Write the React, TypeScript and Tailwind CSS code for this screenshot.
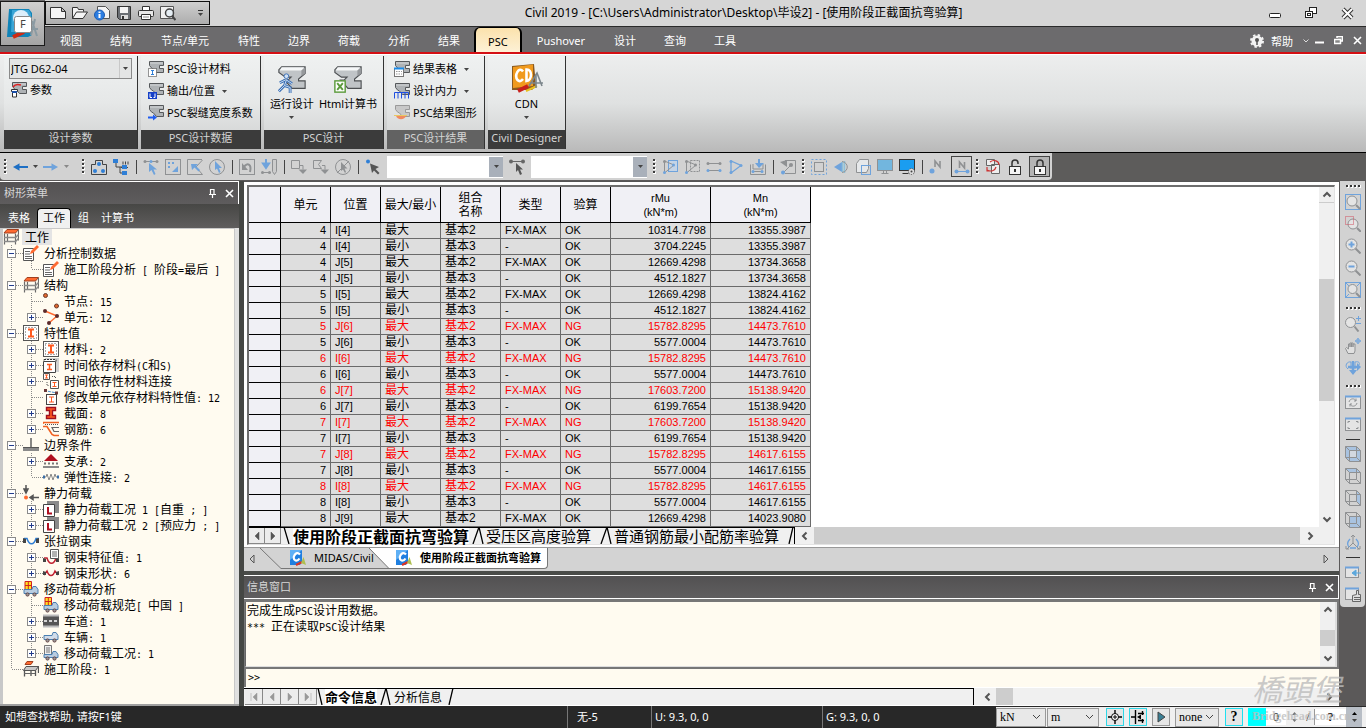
import { Fragment, useState } from "react";
import type { ReactNode } from "react";
import clsx from "clsx";

/* ---------- small helpers ---------- */

function Ic({ children, s = 16, vb = 16 }: { children: ReactNode; s?: number; vb?: number }) {
  return (
    <svg width={s} height={s} viewBox={`0 0 ${vb} ${vb}`} fill="none" className="shrink-0" aria-hidden="true">
      {children}
    </svg>
  );
}

const Caret = ({ className = "text-[#444]" }: { className?: string }) => (
  <svg width="5" height="3" viewBox="0 0 5 3" className={clsx("shrink-0", className)} aria-hidden="true">
    <path d="M0 0h5L2.5 3z" fill="currentColor" />
  </svg>
);

// half-width latin next to full-width chinese
function Mixed({ text }: { text: string }) {
  return (
    <>
      {text.split(/([\x20-\x7e]+)/).map((t, i) =>
        i % 2 ? (
          <span key={i} className="text-[10px] font-['DejaVu_Sans_Mono',monospace]">
            {t}
          </span>
        ) : (
          <Fragment key={i}>{t}</Fragment>
        ),
      )}
    </>
  );
}

const Chevron = ({ dir }: { dir: "up" | "down" | "left" | "right" }) => (
  <Ic s={10} vb={10}>
    <path
      d={
        { up: "M1.5 6.5 5 3l3.5 3.5", down: "M1.5 3.5 5 7l3.5-3.5", left: "M6.5 1.5 3 5l3.5 3.5", right: "M3.5 1.5 7 5 3.5 8.5" }[dir]
      }
      stroke="#555"
      strokeWidth="2"
    />
  </Ic>
);

/* ---------- icons ---------- */

const BLUE = "#2f7fd6";
const SOFT = "#6fa3dc";
const GRAY = "#8f9193";

const beam = (
  <>
    <path d="M1.500.500h14v4h-4v3h4v4h-7l-3.500-4H4l-2.500-3z" fill="#aeb2b5" stroke="#55585b" />
    <path d="M2 2h13" stroke="#d4d7d9" />
  </>
);

const icons: Record<string, ReactNode> = {
  newFile: <path d="M.5 2.5h11l4 4v7H.5zM11.5 2.5v4h4" fill="#f4f4f4" stroke="#333" />,
  open: <path d="M.5 13.5v-11h5l1 2h5v2M.5 13.5l4-6.5h11l-4.500 6.500z" fill="#f4f4f4" stroke="#333" />,
  info: (
    <>
      <path d="M3.500 1.500h8l4 4v8h-12z" fill="#f4f4f4" stroke="#555" />
      <circle cx="5.500" cy="10" r="5" fill="#2b7de1" stroke="#1b5ab0" />
      <path d="M5.500 9v4M5.500 6.500v1.500" stroke="#fff" strokeWidth="2" />
    </>
  ),
  save: (
    <>
      <path d="M1.500 1.500h13v13h-11l-2-2z" fill="#6b6f74" stroke="#333" />
      <path d="M4 2h8v6H4z" fill="#f4f4f4" />
      <path d="M5 10h7v4H5z" fill="#ddd" />
      <path d="M6 11h2v3H6z" fill="#333" />
    </>
  ),
  print: (
    <>
      <path d="M4.500 6.500v-5h7v5" fill="#fff" stroke="#333" />
      <rect x=".5" y="5.500" width="15" height="6" rx="1" fill="#e8e8e8" stroke="#333" />
      <path d="M3.500 9.500h9v5h-9z" fill="#fff" stroke="#333" />
      <path d="M5 12h6" stroke="#888" />
    </>
  ),
  preview: (
    <>
      <path d="M.5 1.500h13v12H.5z" fill="#f0f0f0" stroke="#555" />
      <circle cx="9.500" cy="8" r="4" fill="#e6eef4" stroke="#444" strokeWidth="1.500" />
      <path d="m12 11 3.500 4" stroke="#444" strokeWidth="2" />
    </>
  ),
  gear: (
    <>
      <circle cx="8" cy="8" r="5.500" fill="#f4f4f4" />
      <circle cx="8" cy="8" r="6" stroke="#f4f4f4" strokeWidth="2" strokeDasharray="2.400 2.310" />
      <circle cx="8" cy="7" r="2" fill="#555" />
      <path d="M8 8v4" stroke="#555" strokeWidth="1.500" />
    </>
  ),
  param: (
    <>
      {beam}
      <path d="M2 5c2-3 5-3 8-2" stroke="#d22" strokeWidth="1.500" />
      <path d="M.5 7.500h6v2l-1 1v4.500h-4v-4.500l-1-1z" fill="#fff" stroke="#333" />
      <path d="M1 10h5" stroke="#1b4fa8" strokeWidth="2" />
    </>
  ),
  material: (
    <>
      {beam}
      <rect x=".5" y="7.500" width="8" height="8" fill="#fff" stroke="#333" strokeDasharray="1 1" />
      <path d="M3 9.500h3M3 13.500h3M4.500 9v5" stroke={BLUE} />
    </>
  ),
  output: (
    <>
      {beam}
      <rect x="0" y="9" width="9" height="7" fill="#1540c8" />
      <path d="M2 10.500v4h2M7 10.500v4H5.500" stroke="#fff" />
    </>
  ),
  crack: (
    <>
      {beam}
      <path d="M0 12.500h6" stroke="#1f5cf0" strokeWidth="2" />
      <path d="M5 9.500 9 12.500 5 15.500z" fill="#1f5cf0" />
    </>
  ),
  resTable: (
    <>
      {beam}
      <rect x=".5" y="7.500" width="9" height="8" fill="#fff" stroke="#777" />
      <path d="M0 7.500h10" stroke="#1b8be8" strokeWidth="2" />
      <path d="M2 10.500h6M2 13h6" stroke="#999" strokeDasharray="1.500 1" />
    </>
  ),
  force: (
    <>
      {beam}
      <path d="M.5 15.500v-6h14v6M4 9.500v6M7.500 9.500v6M11 9.500v6" stroke="#1f4fe0" />
    </>
  ),
  diagram: (
    <>
      <path d="M1.500.500h14v4h-4v3h4v4h-7l-3.500-4H4l-2.500-3z" fill="#c8c8c8" stroke="#999" />
      <path d="M2 10.500h10c-1 5-9 5-10 0z" fill="#f08a60" />
      <path d="M0 10.500h13" stroke="#e8c860" />
    </>
  ),
  back: <path d="M16 8H4M6.500 6 3 8l3.500 2z" stroke="#1e6fc4" strokeWidth="2" fill="#1e6fc4" />,
  fwd: <path d="M0 8h12M9.500 6 13 8l-3.500 2z" stroke={SOFT} strokeWidth="2" fill={SOFT} />,
  selBox: (
    <>
      <path d="M.5 5.500h4v-4h7v4h4v10H.5z" stroke="#444" />
      <circle cx="8" cy="5" r="2" fill={BLUE} />
      <circle cx="4" cy="12" r="2" fill={BLUE} />
      <circle cx="12" cy="12" r="2" fill={BLUE} />
    </>
  ),
  selTree: (
    <>
      <path d="M3 2v6h7M7 8v6h4M10 2.500v3M12.500 2.500v3M15 2.500v3M8 8.500h7" stroke="#444" />
      <rect x="0" y="0" width="5" height="4" fill={BLUE} />
      <rect x="9" y="6" width="5" height="4" fill={BLUE} />
      <rect x="9" y="12" width="5" height="4" fill={BLUE} />
    </>
  ),
  selSingle: (
    <>
      <path d="M1 2.500h14" stroke={GRAY} />
      <circle cx="2" cy="2.500" r="1.500" fill={GRAY} />
      <circle cx="8" cy="2.500" r="1.500" fill={SOFT} />
      <circle cx="14" cy="2.500" r="1.500" fill={GRAY} />
      <path d="M6 4v9l2.500-2 2.500 5 1.500-1-2-4.500H14z" fill={SOFT} />
    </>
  ),
  selWin: (
    <>
      <rect x=".5" y=".5" width="15" height="15" stroke={GRAY} />
      <path d="M3 3h2v2H3zM3 7h2v2H3zM7 3h2v2H7z" fill={SOFT} />
      <path d="M13 7v6H7z" fill={SOFT} />
    </>
  ),
  selPoly: (
    <>
      <path d="M15 .5H.5v15h15L9 8l6.500-7" stroke={GRAY} />
      <path d="M4 5h7L9 7l4 4-1.500 1.500-4-4L5 11z" fill={SOFT} />
    </>
  ),
  selCircle: (
    <>
      <circle cx="8" cy="8" r="7.500" stroke={GRAY} />
      <path d="M6 2v9l2-1.500 2 4.500 1.500-1-1.500-4h3z" fill={SOFT} />
    </>
  ),
  undo: (
    <>
      <rect x=".5" y=".5" width="15" height="15" stroke={GRAY} />
      <path d="M5 8c3-5 8-3 6 5" stroke={GRAY} strokeWidth="2" />
      <path d="M3 4v7h6z" fill={GRAY} />
    </>
  ),
  drop: (
    <>
      <path d="M5 0v5M2 4.500h6L5 9z" stroke={SOFT} strokeWidth="2" fill={SOFT} />
      <path d="M1 13.500h9" stroke={GRAY} />
      <circle cx="1.500" cy="13.500" r="1.500" fill={GRAY} />
      <circle cx="8.500" cy="13.500" r="1.500" fill={GRAY} />
      <path d="M11.500.500h4v12l-2 3-2-3z" stroke={GRAY} fill="#ccc" />
    </>
  ),
  unWin: (
    <>
      <path d="M.5 1.500h8v8h-8zM9 6.500h3v4" stroke={GRAY} />
      <path d="M7.500 10.500h8.500L12 15z" fill={GRAY} />
    </>
  ),
  unPoly: (
    <>
      <path d="M8.500 1.500H.5v8h8l-3-4zM9 6.500h3v4" stroke={GRAY} />
      <path d="M7.500 10.500h8.500L12 15z" fill={GRAY} />
    </>
  ),
  unCircle: (
    <>
      <circle cx="8" cy="8" r="7.500" stroke={GRAY} />
      <path d="M14 2 2 14" stroke={GRAY} />
      <path d="M6 3v9l2-1.500 2 3.500 1-1-1.500-3.500h3z" fill={GRAY} />
    </>
  ),
  pickNode: (
    <>
      <circle cx="3" cy="2.500" r="2" fill={BLUE} />
      <path d="M5 4.500 7 14l2-2.500 4 4 1.500-1.500-4-4L14 8z" fill="#555" />
    </>
  ),
  pickElem: (
    <>
      <path d="M1 2.500h14" stroke="#666" />
      <circle cx="2" cy="2.500" r="2" fill="#666" />
      <circle cx="14" cy="2.500" r="2" fill="#666" />
      <path d="M7 4v9l2-2 2 5 2-1-2-4.500h3z" fill="#555" />
    </>
  ),
  act1: (
    <>
      <rect x="6.500" y="1.500" width="9" height="11" stroke={SOFT} fill="#c5d4e6" />
      <path d="M2.500 2v12L12 6z" stroke={GRAY} />
      <circle cx="2.500" cy="2.500" r="1.500" fill={GRAY} />
      <circle cx="2.500" cy="13.500" r="1.500" fill={SOFT} />
      <circle cx="11.500" cy="6" r="1.500" fill={SOFT} />
    </>
  ),
  act2: (
    <>
      <rect x="6.500" y="1.500" width="9" height="11" stroke={GRAY} strokeDasharray="2 1" />
      <path d="M2.500 2v12L12 6z" stroke={GRAY} />
      <circle cx="2.500" cy="2.500" r="1.500" fill={GRAY} />
      <circle cx="2.500" cy="13.500" r="1.500" fill={SOFT} />
      <circle cx="11.500" cy="6" r="1.500" fill={GRAY} />
    </>
  ),
  act3: (
    <>
      <path d="M2 4.500h12M2 11.500h12" stroke={GRAY} />
      <circle cx="2" cy="4.500" r="1.500" fill={GRAY} />
      <circle cx="14" cy="4.500" r="1.500" fill={GRAY} />
      <circle cx="2" cy="11.500" r="1.500" fill={SOFT} />
      <circle cx="14" cy="11.500" r="1.500" fill={SOFT} />
    </>
  ),
  act4: (
    <>
      <path d="M3 2v12l10-7.500z" stroke={SOFT} strokeWidth="1.300" />
      <circle cx="3" cy="2.500" r="1.500" fill={SOFT} />
      <circle cx="3" cy="13.500" r="1.500" fill={SOFT} />
      <circle cx="13" cy="6.500" r="1.500" fill={SOFT} />
    </>
  ),
  act5: (
    <>
      <path d="M.5 5.500v10h15v-10M3 5v5h10V5M3 12.500h9" stroke={GRAY} />
      <path d="M10 0v4h4L9 9 5 4h3V0z" fill={SOFT} />
      <circle cx="3" cy="12.500" r="1.500" fill={SOFT} />
      <circle cx="12" cy="12.500" r="1.500" fill={SOFT} />
    </>
  ),
  act6: (
    <>
      <path d="M5 1.500h10.500v13H5M4 13l7-7" stroke={GRAY} />
      <path d="M0 3 7 1v7z" fill={GRAY} />
      <circle cx="3" cy="13.500" r="2" fill={SOFT} />
      <circle cx="11" cy="6" r="2" fill={GRAY} />
    </>
  ),
  fitAll: (
    <>
      <rect x="3.500" y="3.500" width="9" height="9" stroke={GRAY} />
      <rect x=".5" y=".5" width="15" height="15" stroke={SOFT} strokeDasharray="2 2" />
    </>
  ),
  persp: (
    <>
      <path d="m1 8 8-5v10z" fill="#6fa3dc" />
      <path d="M9.500 3v10M11.500 2v12" stroke="#8fc0d8" strokeWidth="1.500" />
      <path d="M9 2.500c7 1 7 10 0 11" stroke={GRAY} />
    </>
  ),
  hidden: (
    <>
      <path d="M1.500 13.500v-9l3-4h9v9l-2 4z" fill="#e6e8ea" stroke={GRAY} />
      <rect x="6.500" y="6.500" width="9" height="9" stroke={SOFT} />
    </>
  ),
  screen: (
    <>
      <rect x=".5" y=".5" width="15" height="11" fill="#72b6de" stroke={GRAY} />
      <path d="M6.500 12v2M9.500 12v2M4.500 14.500h7" stroke={GRAY} />
    </>
  ),
  screenOpt: (
    <>
      <rect x=".5" y=".5" width="15" height="11" fill="#1a9df0" stroke="#333" />
      <path d="M3.500 14.500h6" stroke="#333" />
      <circle cx="12.500" cy="12.500" r="3" fill="#ddd" stroke="#444" strokeDasharray="1 1" />
      <circle cx="12.500" cy="12.500" r="1" fill="#444" />
    </>
  ),
  nodeNum: (
    <>
      <circle cx="3" cy="12" r="2.500" fill={SOFT} />
      <path d="M6 8V2l5 6V2" stroke={GRAY} strokeWidth="1.600" />
    </>
  ),
  elemNum: (
    <>
      <path d="M2 12.500h12" stroke={SOFT} />
      <circle cx="2.500" cy="12.500" r="2" fill={SOFT} />
      <circle cx="13.500" cy="12.500" r="2" fill={SOFT} />
      <path d="M5.500 9V3l5 6V3" stroke={GRAY} strokeWidth="1.600" />
    </>
  ),
  swap: (
    <>
      <path d="M1.500.500h8v6h-8zM6.500 5.500h8v9h-8z" stroke="#666" fill="#eee" />
      <path d="M5 3c4-3 9-1 9 3M11 8c-1 4-5 5-9 3M2 8v4h4" stroke="#c33" strokeWidth="1.200" />
    </>
  ),
  unlock: (
    <>
      <rect x="2.500" y="7.500" width="11" height="8" fill="#f5f5f5" stroke="#333" />
      <path d="M5 7V4c0-4 6-4 6 0v1" stroke="#333" strokeWidth="1.500" />
      <path d="M8 10v3" stroke="#333" strokeWidth="2" />
    </>
  ),
  lock: (
    <>
      <rect x="2.500" y="7.500" width="11" height="8" fill="#f5f5f5" stroke="#333" />
      <path d="M5 7V4c0-4 6-4 6 0v3" stroke="#333" strokeWidth="1.500" />
      <path d="M8 10v3" stroke="#333" strokeWidth="2" />
    </>
  ),
  zWin: (
    <>
      <rect x=".5" y=".5" width="15" height="15" stroke={SOFT} />
      <circle cx="7" cy="7" r="5" fill="#e4e4e4" stroke={GRAY} />
      <path d="m11 11 4 4" stroke={GRAY} strokeWidth="2" />
    </>
  ),
  zDyn: (
    <>
      <circle cx="8" cy="8" r="5" stroke={GRAY} fill="#e4e4e4" />
      <rect x=".5" y=".5" width="8" height="8" stroke="#d05060" strokeDasharray="1 1" />
      <path d="m12 12 4 4" stroke={GRAY} strokeWidth="2" />
    </>
  ),
  zIn: (
    <>
      <circle cx="6.500" cy="6.500" r="5.500" fill="#e4e4e4" stroke={GRAY} />
      <path d="m10.500 10.500 5 5" stroke={GRAY} strokeWidth="2" />
      <path d="M6.500 3.500v6M3.500 6.500h6" stroke={SOFT} strokeWidth="2" />
    </>
  ),
  zOut: (
    <>
      <circle cx="6.500" cy="6.500" r="5.500" fill="#e4e4e4" stroke={GRAY} />
      <path d="m10.500 10.500 5 5" stroke={GRAY} strokeWidth="2" />
      <path d="M3.500 6.500h6" stroke={SOFT} strokeWidth="2" />
    </>
  ),
  zFit: (
    <>
      <rect x=".5" y=".5" width="15" height="15" stroke={SOFT} />
      <path d="m1 1 3 3M15 1l-3 3M1 15l3-3" stroke={SOFT} />
      <circle cx="7.500" cy="7" r="4.500" fill="#e4e4e4" stroke={GRAY} />
      <path d="m11 11 4 4" stroke={GRAY} strokeWidth="2" />
    </>
  ),
  zRate: (
    <>
      <circle cx="5.500" cy="6.500" r="5" fill="#e4e4e4" stroke={GRAY} />
      <path d="m9.500 10.500 4 5" stroke={GRAY} strokeWidth="2" />
      <path d="M13.500 0v5M11 2.500h5M11 7.500h5" stroke={SOFT} />
    </>
  ),
  pan: (
    <>
      <path d="M3 15.500.500 10.500l1-1 2 1.500V6h1.500v3V5h1.500v4V5H8v4V6h2v7l-1 2.500z" fill="#e0e0e0" stroke={GRAY} />
      <path d="M13 0v6M10 3h6" stroke={SOFT} />
      <path d="M13 .5 15.500 3 13 5.500 10.500 3z" stroke={SOFT} />
    </>
  ),
  rotate: (
    <>
      <path d="M8 1v9M3 7h10" stroke={SOFT} strokeWidth="2.500" />
      <path d="M4 10h8l-4 5zM12 3l4 4-4 4z" fill={SOFT} />
      <path d="M3 9C-1 6 2 1 6 2v7M10 9V2c4-1 5 1 4 3" stroke={SOFT} />
    </>
  ),
  redraw: (
    <>
      <rect x=".5" y="2.500" width="15" height="12" fill="#e4e4e4" stroke={GRAY} />
      <path d="M0 2.500h16" stroke={SOFT} strokeWidth="2" />
      <path d="M4 8c1-4 6-4 7-1M12 9c-1 4-6 4-7 1M11 4.500V7H9M5 12.500V10h2" stroke={GRAY} />
    </>
  ),
  initial: (
    <>
      <rect x=".5" y="2.500" width="15" height="12" fill="#e4e4e4" stroke={GRAY} />
      <path d="M0 2.500h16" stroke={SOFT} strokeWidth="2" />
      <path d="M3 7V5.500h2M11 5.500h2V7M3 11v1.500h2M11 12.500h2V11" stroke={GRAY} />
    </>
  ),
  cubeIso: (
    <>
      <path d="M.5.500h11l4 4v11h-11l-4-4z" fill="#a9c3e0" />
      <path d="M4.500 4.500h7v7h-7z" fill="#d2d8e0" />
      <path d="M.5.500h11l4 4v11h-11l-4-4zM4.500 4.500h11M4.500 4.500v11M4.500 4.500l-4-4M11.500.5v11H.5M11.500 11.500l4 4" stroke={GRAY} />
    </>
  ),
  cubeTop: (
    <>
      <path d="M.5.500h11l4 4h-11z" fill="#a9c3e0" />
      <path d="M.5.500h11l4 4v11h-11l-4-4zM4.500 4.500h11M4.500 4.500v11M4.500 4.500l-4-4M11.500.5v11H.5M11.500 11.500l4 4" stroke={GRAY} />
    </>
  ),
  cubeSide: (
    <>
      <path d="M11.500.500l4 4v11l-4-4z" fill="#a9c3e0" />
      <path d="M.5.500h11l4 4v11h-11l-4-4zM4.500 4.500h11M4.500 4.500v11M4.500 4.500l-4-4M11.500.5v11H.5M11.500 11.500l4 4" stroke={GRAY} />
    </>
  ),
  cubeFront: (
    <>
      <path d="M4.500 4.500h11v11h-11z" fill="#a9c3e0" />
      <path d="M.5.500h11l4 4v11h-11l-4-4zM4.500 4.500h11M4.500 4.500v11M4.500 4.500l-4-4M11.500.5v11H.5M11.500 11.500l4 4" stroke={GRAY} />
    </>
  ),
  axes: (
    <>
      <path d="M8 1v8l-6 6M8 9l6 6M6 3l2-2 2 2M1 12v3h3M15 12v3h-3" stroke={GRAY} />
      <path d="M5 5c-3 3-3 6-1 8M11 5c3 3 3 6 1 8M5 14h6" stroke={SOFT} strokeWidth="1.400" />
    </>
  ),
  winBack: (
    <>
      <rect x=".5" y="3.500" width="13" height="10" fill="#e4e4e4" stroke={GRAY} />
      <path d="M0 3.500h14" stroke={SOFT} strokeWidth="2" />
      <path d="M16 9h-5M11 6v6L7 9z" stroke="#5ba7dc" fill="#5ba7dc" />
    </>
  ),
  winHand: (
    <>
      <rect x=".5" y="2.500" width="13" height="11" fill="#e4e4e4" stroke={GRAY} />
      <path d="M0 2.500h14" stroke={SOFT} strokeWidth="2" />
      <path d="M7.500 15.500v-6l4-1V4.500h2v4h2v7z" fill="#ddd" stroke="#666" />
      <path d="M9 11.500h6M9 13.500h6" stroke="#666" />
    </>
  ),
  // tree
  frame: (
    <>
      <path d="M4 .5h11.500l-3 3.500H1z" fill="#ff6a30" stroke="#a04020" />
      <path d="M1.500 4.500v11M12.500 4.500v11M15.500 1v10.500M4.500 5v8" stroke="#6a6a6a" strokeWidth="1.200" />
      <path d="M1 8.500h11.500l3-3M1 12.500h11.500l3-3" stroke="#8a8a8a" strokeWidth="1.400" />
    </>
  ),
  docPen: (
    <>
      <path d="M.5 3.500h10v12H.5z" fill="#fff" stroke="#555" />
      <path d="M2 6.500h5M2 9h5M2 11.500h7M2 13.500h7" stroke="#666" />
      <path d="m7 9 1-3 6-6 2 2-6 6z" fill="#ff6a30" />
    </>
  ),
  nodes: (
    <>
      <circle cx="2.500" cy="2.500" r="2" fill="#e0662c" stroke="#6b3a2a" />
      <circle cx="13.500" cy="13" r="2" fill="#e0662c" stroke="#6b3a2a" />
    </>
  ),
  elems: (
    <>
      <path d="m2 2 12 5-8 7" stroke="#ff6a30" strokeWidth="1.400" />
      <circle cx="2" cy="2" r="2" fill="#5b2a2a" />
      <circle cx="14" cy="7" r="2" fill="#5b2a2a" />
      <circle cx="6" cy="14" r="2" fill="#5b2a2a" />
    </>
  ),
  prop: (
    <>
      <rect x=".5" y=".5" width="15" height="15" fill="#fff" stroke="#555" />
      <path d="M2.500 2.500h11v11h-11z" stroke="#555" strokeDasharray="1 2" />
      <path d="M5 4.500h6M5 11.500h6M8 4v8" stroke="#ff5a20" strokeWidth="2" />
    </>
  ),
  timeMat: (
    <>
      <path d="M2 1h14v14H2z" fill="#d0d0d0" />
      <path d="M1 2.500h12v2H1z" fill="#fff" stroke="#333" strokeDasharray="2 1" />
      <path d="M.5 4.500h12v11H.5z" fill="#fff" stroke="#444" />
      <path d="M4 7.500h5M4 12.500h5M6.500 7v6" stroke="#ff5a20" strokeWidth="1.500" />
    </>
  ),
  timeLink: (
    <>
      <path d="M.5.500h6v6h-6zM7.500 7.500h8v8h-8z" fill="#fff" stroke="#555" />
      <path d="M2 2h3M2 5h3M3.500 2v3M9.500 9.500h4M9.500 13.500h4M11.500 9v5" stroke="#ff5a20" />
      <path d="M9 3.500h3.500V6M4 9v3.500h2" stroke="#555" strokeDasharray="1 1" />
    </>
  ),
  modElem: (
    <>
      <path d="M1 1.500 14 4" stroke="#4a90d0" strokeDasharray="3 1" />
      <path d="M1 0h3v3H1zM12 2.500h3v3h-3z" fill="#6b3a3a" />
      <rect x="3.500" y="5.500" width="10" height="10" fill="#fff" stroke="#444" />
      <path d="M6 8h5M6 13h5M8.500 8v5" stroke="#ff5a20" />
    </>
  ),
  section: <path d="M3.500 2.500h9v3h-3v5h3v3h-9v-3h3v-5h-3z" fill="#ff5a20" stroke="#a01020" strokeWidth="1.400" />,
  rebar: (
    <>
      <path d="M0 3V1.500h16M0 5.500h4l5 8 2 1h5" stroke="#f06020" strokeWidth="1.600" />
      <path d="M16 6.500H9l2 4h5" stroke="#666" strokeWidth="1.200" />
      <path d="M2 3.500h14" stroke="#555" strokeDasharray="1 1" />
    </>
  ),
  bound: (
    <>
      <path d="M8 1v10" stroke="#555" strokeWidth="1.400" />
      <path d="M0 10h16v4H0z" fill="#8a8a8a" />
      <path d="M0 10.500h16" stroke="#555" />
    </>
  ),
  support: (
    <>
      <path d="M8 1 1 8h14z" fill="#b01020" />
      <path d="M1 10.500h14" stroke="#777" strokeWidth="2" strokeDasharray="2 2" />
      <path d="M0 14h16" stroke="#8a8a8a" strokeWidth="2" />
    </>
  ),
  spring: (
    <>
      <path d="M0 8h3l1-3 2 6 2-6 2 6 2-6 1 3h3" stroke="#888" />
      <path d="M0 6.500h2v3H0zM14 6.500h2v3h-2z" fill="#3a6fa8" />
    </>
  ),
  load: (
    <>
      <path d="M3 0v5M1 4h4L3 8z" stroke="#555" strokeWidth="1.500" fill="#555" />
      <path d="M16 12.500h-6M10 10.500v4l-3-2z" stroke="#555" strokeWidth="1.500" fill="#555" />
      <circle cx="3" cy="12.500" r="2" fill="#ff6a30" />
    </>
  ),
  loadCase: (
    <>
      <path d="M4 0h12v12H4z" fill="#8a8a8a" />
      <path d="M.5 3.500h11v12H.5z" fill="#fff" stroke="#444" />
      <path d="M5 6v6.500h4" stroke="#b01020" strokeWidth="2" />
    </>
  ),
  tendon: (
    <>
      <path d="M1 5.500h3c2 7 7 7 9 0h3" stroke="#2f7fd6" strokeWidth="1.500" />
      <path d="M0 5l3 1v4H0zM16 5l-3 1v4h3z" fill="#444" />
    </>
  ),
  tendonProp: (
    <>
      <path d="M1 9h3c2 7 7 7 9 0h3" stroke="#c02030" strokeWidth="1.500" />
      <path d="M0 9l3 1v3H0zM16 9l-3 1v3h3z" fill="#444" />
      <path d="M7.500.500h8v9h-8z" fill="#fff" stroke="#555" />
      <path d="M9 3h5M9 5h5M9 7h5" stroke="#666" />
    </>
  ),
  tendonShape: (
    <>
      <path d="M1 10 4 6c2 6 6 6 8 0l3 4" stroke="#c02030" strokeWidth="1.500" />
      <path d="M0 6l3 1v3H0zM16 6l-3 1v3h3z" fill="#444" />
    </>
  ),
  truckLoad: (
    <>
      <path d="M2 .5h6.500v8H2z" fill="#ffe020" stroke="#d02020" />
      <path d="M5.300 0v8M2 4.500h6" stroke="#d02020" />
      <path d="M1 8.500h8l1-3h3l2 3v4H1z" fill="#b8cce0" stroke="#4a7fb0" />
      <circle cx="4.500" cy="13.500" r="1.600" fill="#999" stroke="#644" />
      <circle cx="11.500" cy="13.500" r="1.600" fill="#999" stroke="#644" />
    </>
  ),
  lane: (
    <>
      <path d="M0 2h16v12H0z" fill="#555" />
      <path d="M0 2.500h16M0 13.500h16" stroke="#bbb" strokeWidth="2" />
      <path d="M1 8h14" stroke="#fff" strokeWidth="1.500" strokeDasharray="3 2" />
    </>
  ),
  truck: (
    <>
      <path d="M1 6.500h8l1-3h3l2 3v4H1z" fill="#d0dcea" stroke="#4a7fb0" />
      <circle cx="4.500" cy="11.500" r="1.600" fill="#999" stroke="#644" />
      <circle cx="11.500" cy="11.500" r="1.600" fill="#999" stroke="#644" />
    </>
  ),
  truckCase: (
    <>
      <path d="M1.500.500h7v9h-7z" fill="#eee" stroke="#777" />
      <path d="M3 3h4M3 5h4M3 7h4" stroke="#777" />
      <path d="M1 9.500h8l1-3h3l2 3v3H1z" fill="#b8cce0" stroke="#4a7fb0" />
      <circle cx="4.500" cy="13.500" r="1.600" fill="#999" stroke="#644" />
      <circle cx="11.500" cy="13.500" r="1.600" fill="#999" stroke="#644" />
    </>
  ),
  stage: (
    <>
      <path d="M4 .5h6l-2 3H2z" fill="#ff6a30" stroke="#a04020" />
      <path d="M1.500 8v7.500M8 5v10M12.500 5v10M15.500 5v7" stroke="#555" strokeWidth="1.300" />
      <path d="M3 5.500h12.500l-3 4H.5z" fill="#c8c8c8" stroke="#555" />
      <path d="M1 12.500h11" stroke="#666" />
    </>
  ),
};

const I = ({ n }: { n: string }) => <Ic>{icons[n]}</Ic>;

const Pin = () => (
  <Ic s={9} vb={9}>
    <path d="M2.500 0v5M6 0v5M2 .5h4M1 5.500h7M4.500 6v3" stroke="#fff" strokeWidth="1.200" />
  </Ic>
);
const Cross = () => (
  <Ic s={9} vb={9}>
    <path d="m1 1 7 7M8 1 1 8" stroke="#fff" strokeWidth="1.600" />
  </Ic>
);

const CivilLogo = () => (
  <Ic>
    <path d="M0 0h12v12l-2 3H0z" fill="#1f7fe0" />
    <path d="M0 0h12L0 10z" fill="#5fb0f5" />
    <path d="M10 4.500C6-.500 1 9 5.500 10.500c2 .500 3-.500 4-2" stroke="#fff" strokeWidth="2.200" />
    <path d="m6 15 6-3" stroke="#d32" strokeWidth="2" />
    <path d="m11 13 2.500-6 2.500 8z" fill="#aebf50" />
  </Ic>
);

/* ---------- header ---------- */

const menus = ["视图", "结构", "节点/单元", "特性", "边界", "荷载", "分析", "结果", "PSC", "Pushover", "设计", "查询", "工具"];

function Header() {
  return (
    <header className="flex h-[54px] shrink-0 border-b-2 border-[#d40f14] bg-[#6c6b6d]">
      <button
        aria-label="F"
        className="mt-px flex h-[45px] w-[45px] shrink-0 items-center justify-center border border-[#1a1a1a] bg-linear-to-b from-[#d0d0d0] to-[#a4a4a4]"
      >
        <Ic s={34} vb={34}>
          <path d="M3 2h20l3 4v22l-4 2H1z" fill="#0f83b8" />
          <path d="M6 3h17l2 4v18H5z" fill="#3aa5d6" />
          <circle cx="15" cy="11" r="8" fill="#dceefa" />
          <path d="m7 30 11-5" stroke="#cf2b14" strokeWidth="4" />
          <path d="m26 14 5 15M29 12l-4 16M24 22h8" stroke="#8a9aa2" strokeWidth="2" />
          <rect x="8.500" y="9.500" width="17" height="16" rx="2" fill="#fff" stroke="#888" />
          <text x="14" y="21" fontSize="11" fill="#444" fontFamily="Noto Sans">
            F
          </text>
        </Ic>
      </button>
      <div className="flex min-w-0 flex-1 flex-col">
        <div className="flex h-[27px] items-center border-b border-[#2a2a2a] bg-[#d6d6d6]">
          <div className="flex h-6 w-[165px] items-center gap-1.5 border border-[#111] bg-linear-to-b from-[#cfcfcf] to-[#adadad] pl-1">
            {["newFile", "open", "info", "save", "print", "preview"].map((n) => (
              <button key={n} aria-label={n}>
                <I n={n} />
              </button>
            ))}
            <span className="ml-4 border-t border-[#333] pt-0.5">
              <Caret />
            </span>
          </div>
          <h1 className="flex-1 pl-2 text-center text-xs whitespace-nowrap text-black">
            Civil 2019 - [C:\Users\Administrator\Desktop\毕设2] - [使用阶段正截面抗弯验算]
          </h1>
          <div className="flex items-center gap-6 pr-3">
            <button aria-label="最小化">
              <Ic s={12} vb={12}>
                <rect x=".5" y="6.500" width="11" height="4" rx="1" fill="#fff" stroke="#222" />
              </Ic>
            </button>
            <button aria-label="还原">
              <Ic s={12} vb={12}>
                <rect x="4.500" y=".5" width="7" height="6" fill="#fff" stroke="#222" />
                <rect x=".5" y="4.500" width="7" height="6" fill="#fff" stroke="#222" />
                <rect x="2.500" y="6.500" width="3" height="2" stroke="#222" />
              </Ic>
            </button>
            <button aria-label="关闭">
              <Ic s={13} vb={13}>
                <path d="m2 2 9 9M11 2l-9 9" stroke="#333" strokeWidth="4" />
                <path d="m2 2 9 9M11 2l-9 9" stroke="#fff" strokeWidth="2" />
              </Ic>
            </button>
          </div>
        </div>
        <nav className="flex flex-1 items-stretch pl-px text-[11px] text-white">
          {menus.map((m) => (
            <a
              key={m}
              href="#"
              className={clsx(
                "flex items-center pt-1 whitespace-nowrap",
                m === "PSC"
                  ? "rounded-t-md border-x-2 border-t border-black bg-linear-to-b from-[#fbe2ac] to-[#fdf1d6] px-3 text-black"
                  : m.length > 2
                    ? "px-[15px]"
                    : "px-3.5",
              )}
            >
              {m}
            </a>
          ))}
          <div className="ml-auto flex items-center gap-2.5 pt-0.5 pr-1">
            <a href="#" className="flex items-center gap-1.5">
              <I n="gear" />
              <span className="pt-1">帮助</span>
            </a>
            <svg width="6" height="4" viewBox="0 0 6 4" aria-hidden="true">
              <path d="M.5.500 3 3 5.500.500" stroke="#ddd" fill="none" />
            </svg>
            <button aria-label="最小化文档" className="-ml-1">
              <Ic s={9} vb={9}>
                <path d="M0 6.500h9" stroke="#fff" strokeWidth="2" />
              </Ic>
            </button>
            <button aria-label="还原文档">
              <Ic s={9} vb={9}>
                <path d="M3 2V.5h5.500V5H7M.5 3.500h6v4h-6z" stroke="#fff" strokeWidth="1.500" fill="#888" />
              </Ic>
            </button>
            <button aria-label="关闭文档">
              <Cross />
            </button>
          </div>
        </nav>
      </div>
    </header>
  );
}

function Group({ title, width, dim, children }: { title: string; width: string; dim?: boolean; children: ReactNode }) {
  return (
    <section
      className={clsx("flex shrink-0 flex-col border-r border-[#333] bg-linear-to-b from-[#eff1f1] via-[#e6e8e8] to-[#cfd0d0]", width)}
    >
      <div className="flex-1 pt-0.5">{children}</div>
      <h2
        className={clsx(
          "h-[19px] text-center text-[11px] leading-4 whitespace-nowrap text-[#d4d4d4]",
          dim ? "bg-[#626262]" : "bg-[#3b3b3b]",
        )}
      >
        {title}
      </h2>
    </section>
  );
}

function SmallBtn({ icon, label, menu }: { icon: string; label: string; menu?: boolean }) {
  return (
    <button className="flex h-[22px] items-center gap-[3px] text-[11px] whitespace-nowrap text-black">
      <I n={icon} />
      {label}
      {menu && (
        <span className="ml-1">
          <Caret />
        </span>
      )}
    </button>
  );
}

function BigBtn({ icon, label, menu }: { icon: ReactNode; label: string; menu?: boolean }) {
  return (
    <button className="flex flex-col items-center text-[11px] whitespace-nowrap text-black">
      {icon}
      <span className="mt-0.5 leading-4">{label}</span>
      {menu && (
        <span className="mt-1">
          <Caret />
        </span>
      )}
    </button>
  );
}

const bigBeam = (
  <>
    <path d="M5 3h25v7l-7 6v2h7v8h-14l-8-9h4l3-3H9L2 9V6z" fill="#c0c4c7" stroke="#4c4f52" strokeWidth="1.200" />
    <path d="M5 3.500h24L26 7H3z" fill="#f5f7f8" />
    <path d="M26 7v6l4-3V4z" fill="#96999c" />
  </>
);

function Ribbon() {
  return (
    <div className="flex h-[99px] shrink-0 gap-[3px] border-t border-b border-t-white border-b-black bg-linear-to-b from-[#edeeee] via-[#dfe1e1] to-[#b9b9b9] pt-px pb-[3px] pl-1">
      <Group title="设计参数" width="w-[134px]">
        <div className="relative mx-[5px]">
          <select
            aria-label="设计参数"
            className="block h-[21px] w-full appearance-none border border-[#8a8a8a] bg-[#e4e5e5] px-px text-[11px] leading-4 text-black"
          >
            <option>JTG D62-04</option>
          </select>
          <span className="pointer-events-none absolute inset-y-px right-px flex w-3 items-center justify-center border-l border-[#c8c8c8]">
            <Caret />
          </span>
        </div>
        <div className="pl-[7px]">
          <SmallBtn icon="param" label="参数" />
        </div>
      </Group>
      <Group title="PSC设计数据" width="w-[120px]">
        <div className="pl-[7px]">
          <SmallBtn icon="material" label="PSC设计材料" />
          <SmallBtn icon="output" label="输出/位置" menu />
          <SmallBtn icon="crack" label="PSC裂缝宽度系数" />
        </div>
      </Group>
      <Group title="PSC设计" width="w-[120px]">
        <div className="flex items-start justify-center gap-[5px] pt-1.5">
          <BigBtn
            label="运行设计"
            menu
            icon={
              <Ic s={30} vb={32}>
                {bigBeam}
                <circle cx="10" cy="13" r="2.500" fill="#cfe0f4" stroke="#3b6fb5" />
                <path d="m9 17-6 3M10 17l6 4M10 17l-2 6-6 6M8 23l6 2v6" stroke="#3b6fb5" strokeWidth="3" />
                <path d="m9 17-6 3M10 17l6 4M10 17l-2 6-6 6M8 23l6 2v6" stroke="#cfe0f4" />
              </Ic>
            }
          />
          <BigBtn
            label="Html计算书"
            icon={
              <Ic s={30} vb={32}>
                {bigBeam}
                <rect x="2" y="18" width="11" height="12" fill="#fff" stroke="#5a9a3a" strokeWidth="1.500" />
                <path d="m4.500 20.500 6 7M10.500 20.500l-6 7" stroke="#5a9a3a" strokeWidth="2" />
              </Ic>
            }
          />
        </div>
      </Group>
      <Group title="PSC设计结果" width="w-[98px]" dim>
        <div className="pl-[7px]">
          <SmallBtn icon="resTable" label="结果表格" menu />
          <SmallBtn icon="force" label="设计内力" menu />
          <SmallBtn icon="diagram" label="PSC结果图形" />
        </div>
      </Group>
      <Group title="Civil Designer" width="w-[78px]">
        <div className="flex justify-center pt-1">
          <BigBtn
            label="CDN"
            menu
            icon={
              <Ic s={32} vb={32}>
                <path d="M1 4 23 2l2 22-4 4H1z" fill="#8a5a20" />
                <path d="M2 5 22 2.500V24L2 26z" fill="#f09a1e" />
                <path d="M12 9.500C8 4 3 13 6.500 18c2 2 4 1 5.500-1M15.500 7.500V19c6-1 6-12 0-11.500z" stroke="#fff" strokeWidth="2.600" />
                <path d="m7 29 10-5" stroke="#c8201c" strokeWidth="4" />
                <path d="m15 29 11-5" stroke="#e8c020" strokeWidth="2" />
                <path d="m18 24 8-13 5 13M19 21h13M25 12v14" stroke="#7c868c" strokeWidth="1.600" />
              </Ic>
            }
          />
        </div>
      </Group>
    </div>
  );
}

/* ---------- toolbar ---------- */

const Grip = () => (
  <svg width="3" height="16" viewBox="0 0 3 16" className="shrink-0" aria-hidden="true">
    <path d="M1.500 1v15" stroke="#fff" strokeWidth="3" strokeDasharray="2 2" />
    <path d="M1 0v16" stroke="#3c3c3c" strokeWidth="2" strokeDasharray="2 2" />
  </svg>
);
const Sep = () => <span className="ml-px h-3.5 w-px shrink-0 bg-[#444]" />;

function Tools({ list }: { list: string[] }) {
  return (
    <>
      {list.map((n, i) =>
        n === "|" ? (
          <Sep key={i} />
        ) : (
          <button key={i} aria-label={n} className="shrink-0">
            <I n={n} />
          </button>
        ),
      )}
    </>
  );
}

function Combo({ label }: { label: string }) {
  return (
    <div className="flex h-[22px] w-[116px] shrink-0 items-center bg-white">
      <input aria-label={label} className="w-full min-w-0 flex-1 bg-transparent px-1 text-[11px] outline-none" />
      <button aria-label={label} className="flex h-5 w-3.5 items-center justify-center bg-[#a9b0ba]">
        <Caret />
      </button>
    </div>
  );
}

function Toolbar() {
  return (
    <div className="flex h-[27px] shrink-0 bg-[#5d5c5b]">
      <div className="flex items-center rounded-b-sm bg-[#d2d2d2] pr-0.5">
        <div className="flex w-[79px] shrink-0 items-center gap-[5px] pl-1">
          <Grip />
          <Tools list={["back"]} />
          <Caret />
          <Tools list={["fwd"]} />
          <Caret className="text-[#888]" />
        </div>
        <div className="flex items-center gap-1.5 pl-[3px]">
          <Grip />
          <Tools
            list={["selBox", "selTree", "|", "selSingle", "selWin", "selPoly", "selCircle", "|", "undo", "drop", "|", "unWin", "unPoly", "unCircle", "|", "pickNode"]}
          />
          <Combo label="节点选择" />
          <Tools list={["pickElem"]} />
          <Combo label="单元选择" />
        </div>
        <div className="flex items-center gap-1.5 pl-1.5">
          <Grip />
          <Tools list={["act1", "act2", "act3", "act4", "act5", "|", "act6"]} />
        </div>
        <div className="flex items-center gap-1.5 pl-1.5">
          <Grip />
          <Tools list={["fitAll", "persp", "hidden", "screen", "screenOpt", "|", "nodeNum"]} />
          <button aria-label="elemNum" className="flex h-[21px] w-[21px] items-center justify-center border border-[#444]">
            <I n="elemNum" />
          </button>
        </div>
        <div className="flex items-center gap-1.5 pl-1">
          <Grip />
          <Tools list={["swap", "unlock"]} />
          <button aria-label="lock" className="flex h-[21px] w-[21px] items-center justify-center border border-[#444] bg-[#b4b4b4]">
            <I n="lock" />
          </button>
        </div>
      </div>
    </div>
  );
}

/* ---------- tree ---------- */

type Node = { lv: 0 | 1 | 2; icon: string; text: string; box?: "+" | "-"; end?: boolean };

const tree: Node[] = [
  { lv: 0, icon: "frame", text: "工作" },
  { lv: 1, icon: "docPen", text: "分析控制数据", box: "-" },
  { lv: 2, icon: "docPen", text: "施工阶段分析 [ 阶段=最后 ]", end: true },
  { lv: 1, icon: "frame", text: "结构", box: "-" },
  { lv: 2, icon: "nodes", text: "节点: 15" },
  { lv: 2, icon: "elems", text: "单元: 12", box: "+", end: true },
  { lv: 1, icon: "prop", text: "特性值", box: "-" },
  { lv: 2, icon: "prop", text: "材料: 2", box: "+" },
  { lv: 2, icon: "timeMat", text: "时间依存材料(C和S)", box: "+" },
  { lv: 2, icon: "timeLink", text: "时间依存性材料连接", box: "+" },
  { lv: 2, icon: "modElem", text: "修改单元依存材料特性值: 12" },
  { lv: 2, icon: "section", text: "截面: 8", box: "+" },
  { lv: 2, icon: "rebar", text: "钢筋: 6", box: "+", end: true },
  { lv: 1, icon: "bound", text: "边界条件", box: "-" },
  { lv: 2, icon: "support", text: "支承: 2", box: "+" },
  { lv: 2, icon: "spring", text: "弹性连接: 2", end: true },
  { lv: 1, icon: "load", text: "静力荷载", box: "-" },
  { lv: 2, icon: "loadCase", text: "静力荷载工况 1 [自重 ; ]", box: "+" },
  { lv: 2, icon: "loadCase", text: "静力荷载工况 2 [预应力 ; ]", box: "+", end: true },
  { lv: 1, icon: "tendon", text: "张拉钢束", box: "-" },
  { lv: 2, icon: "tendonProp", text: "钢束特征值: 1", box: "+" },
  { lv: 2, icon: "tendonShape", text: "钢束形状: 6", box: "+", end: true },
  { lv: 1, icon: "truckLoad", text: "移动荷载分析", box: "-" },
  { lv: 2, icon: "truckLoad", text: "移动荷载规范[ 中国 ]" },
  { lv: 2, icon: "lane", text: "车道: 1", box: "+" },
  { lv: 2, icon: "truck", text: "车辆: 1", box: "+" },
  { lv: 2, icon: "truckCase", text: "移动荷载工况: 1", box: "+", end: true },
  { lv: 1, icon: "stage", text: "施工阶段: 1", end: true },
];

// dotted guide cell with the optional expander box
function Guide({ through, end, box }: { through?: boolean; end?: boolean; box?: "+" | "-" }) {
  return (
    <svg width="20" height="16" viewBox="0 0 20 16" className="shrink-0" aria-hidden="true">
      <path d={through ? "M8.500 0v16" : `M8.500 0v${end ? 8 : 16}M9 8.500h11`} stroke="#8a8a8a" strokeDasharray="1 1" />
      {box && (
        <>
          <rect x="4.500" y="4.500" width="8" height="8" fill="#fff" stroke="#8a8a8a" />
          <path d={box === "+" ? "M6 8.500h5M8.500 6v5" : "M6 8.500h5"} stroke="#223c8c" />
        </>
      )}
    </svg>
  );
}

const panelTabs = ["表格", "工作", "组", "计算书"];

function TreePanel() {
  const [tab, setTab] = useState("工作");
  return (
    <aside className="flex w-[239px] shrink-0 flex-col border-b-2 border-[#a0a0a0] bg-[#e0e0e0]">
      <div className="flex h-[23px] shrink-0 items-center border-t border-r border-white bg-linear-to-b from-[#545253] to-[#5e5c5d] pr-1 pl-1 text-[11px] text-[#d6d6d6]">
        <span className="flex-1">树形菜单</span>
        <button aria-label="固定" className="mr-2">
          <Pin />
        </button>
        <button aria-label="关闭面板">
          <Cross />
        </button>
      </div>
      <div role="tablist" className="flex h-6 shrink-0 items-end bg-linear-to-b from-[#474745] to-[#5f5d5d] pl-0.5 text-[11px] text-white">
        {panelTabs.map((t) => (
          <button
            key={t}
            role="tab"
            aria-selected={t === tab}
            onClick={() => setTab(t)}
            className={clsx(
              "h-5 rounded-t-sm",
              t === tab ? "mx-px border border-b-0 border-black bg-[#f0f0f0] px-[5px] text-black" : "px-1.5 pt-px",
            )}
          >
            {t}
          </button>
        ))}
      </div>
      <ul className="mr-1 flex-1 overflow-hidden border-t border-l-3 border-r border-[#c8c8c8] bg-[#fffbf0] font-['Noto_Sans_CJK_SC',sans-serif] text-xs leading-4 text-black">
        {tree.map((n, i) => (
          <li key={i} className="flex h-4 items-center">
            {n.lv === 1 && <Guide end={n.end} box={n.box} />}
            {n.lv === 2 && (
              <>
                <Guide through />
                <Guide end={n.end} box={n.box} />
              </>
            )}
            <I n={n.icon} />
            <span className={clsx("h-4 whitespace-pre", n.lv ? "ml-[5px]" : "ml-[3px] bg-[#e4e4e4] px-[3px]")}>
              <Mixed text={n.text} />
            </span>
          </li>
        ))}
      </ul>
    </aside>
  );
}

/* ---------- result table ---------- */

type Row = [string, string, boolean, string, string, boolean?];

// 单元, 位置, 最大?, rMu, Mn, NG?
const rows: Row[] = [
  ["4", "I[4]", true, "10314.7798", "13355.3987"],
  ["4", "I[4]", false, "3704.2245", "13355.3987"],
  ["4", "J[5]", true, "12669.4298", "13734.3658"],
  ["4", "J[5]", false, "4512.1827", "13734.3658"],
  ["5", "I[5]", true, "12669.4298", "13824.4162"],
  ["5", "I[5]", false, "4512.1827", "13824.4162"],
  ["5", "J[6]", true, "15782.8295", "14473.7610", true],
  ["5", "J[6]", false, "5577.0004", "14473.7610"],
  ["6", "I[6]", true, "15782.8295", "14473.7610", true],
  ["6", "I[6]", false, "5577.0004", "14473.7610"],
  ["6", "J[7]", true, "17603.7200", "15138.9420", true],
  ["6", "J[7]", false, "6199.7654", "15138.9420"],
  ["7", "I[7]", true, "17603.7200", "15138.9420", true],
  ["7", "I[7]", false, "6199.7654", "15138.9420"],
  ["7", "J[8]", true, "15782.8295", "14617.6155", true],
  ["7", "J[8]", false, "5577.0004", "14617.6155"],
  ["8", "I[8]", true, "15782.8295", "14617.6155", true],
  ["8", "I[8]", false, "5577.0004", "14617.6155"],
  ["8", "J[9]", true, "12669.4298", "14023.9080"],
];

const th = "border-r border-b border-black bg-[#f0f0f5] p-0 text-center font-normal";
const td = "h-4 border-r border-b border-[#6a6a6a] bg-[#dedede] px-1 py-0 whitespace-nowrap";

function ResultTable() {
  return (
    <table className="w-[562px] table-fixed border-separate border-spacing-0 font-['Liberation_Sans','Noto_Sans_CJK_SC',sans-serif] text-[11px] leading-[15px] text-black">
      <colgroup>
        <col className="w-8" />
        <col className="w-[50px]" />
        <col className="w-[50px]" />
        <col className="w-[60px]" />
        <col className="w-[60px]" />
        <col className="w-[60px]" />
        <col className="w-[50px]" />
        <col className="w-[100px]" />
        <col className="w-[100px]" />
      </colgroup>
      <thead>
        <tr className="h-9">
          <th className={th} />
          <th className={clsx(th, "text-xs")}>单元</th>
          <th className={clsx(th, "text-xs")}>位置</th>
          <th className={clsx(th, "text-xs whitespace-nowrap")}>最大/最小</th>
          <th className={clsx(th, "text-xs leading-[14px]")}>
            组合
            <br />
            名称
          </th>
          <th className={clsx(th, "text-xs")}>类型</th>
          <th className={clsx(th, "text-xs")}>验算</th>
          <th className={clsx(th, "leading-[14px]")}>
            rMu
            <br />
            (kN*m)
          </th>
          <th className={clsx(th, "leading-[14px]")}>
            Mn
            <br />
            (kN*m)
          </th>
        </tr>
      </thead>
      <tbody>
        {rows.map(([el, pos, max, rmu, mn, ng], i) => (
          <tr key={i} className={ng ? "text-[#ff0000]" : ""}>
            <th className="h-4 border-r border-b border-black bg-[#f0f0f5] p-0" />
            <td className={clsx(td, "text-right")}>{el}</td>
            <td className={td}>{pos}</td>
            <td className={clsx(td, "text-xs leading-[15px]")}>{max ? "最大" : "最小"}</td>
            <td className={clsx(td, "text-xs leading-[15px]")}>{max ? "基本2" : "基本3"}</td>
            <td className={td}>{max ? "FX-MAX" : "-"}</td>
            <td className={td}>{ng ? "NG" : "OK"}</td>
            <td className={clsx(td, "text-right")}>{rmu}</td>
            <td className={clsx(td, "text-right")}>{mn}</td>
          </tr>
        ))}
      </tbody>
    </table>
  );
}

const NavBtn = ({ label, d, color = "#555" }: { label: string; d: string; color?: string }) => (
  <button
    aria-label={label}
    className="flex h-4 flex-1 items-center justify-center border-r border-b border-[#888] bg-[#ececec]"
  >
    <Ic s={10} vb={10}>
      <path d={d} fill={color} stroke={color} strokeWidth=".5" />
    </Ic>
  </button>
);

const Slope = ({ d, w = 10, fill = "none" }: { d: string; w?: number; fill?: string }) => (
  <svg width={w} height="16" viewBox={`0 0 ${w} 16`} className="shrink-0" aria-hidden="true">
    <path d={d} stroke="#000" strokeWidth="1.300" fill={fill} />
  </svg>
);

function ResultView() {
  return (
    <section className="flex min-h-0 flex-1 flex-col border-t border-[#555] bg-white pt-[3px] pr-1 pl-[3px]">
      <div className="flex min-h-0 flex-1 flex-col border-t-2 border-r border-b border-l-2 border-t-[#6e6e6e] border-r-[#e3e3e3] border-b-[#e3e3e3] border-l-[#6e6e6e]">
        <div className="flex min-h-0 flex-1">
          <div className="flex-1 overflow-hidden">
            <ResultTable />
          </div>
          <div className="flex w-[15px] shrink-0 flex-col items-center bg-[#f0f0f0]">
            <button aria-label="向上" className="flex h-4 w-full items-center justify-center border-b border-[#ccc]">
              <Chevron dir="up" />
            </button>
            <div className="flex w-full flex-1 flex-col">
              <span className="basis-[76px]" />
              <span className="h-[122px] bg-[#cdcdcd]" />
            </div>
            <button aria-label="向下" className="flex h-4 items-center">
              <Chevron dir="down" />
            </button>
          </div>
        </div>
        <div className="flex h-[17px] shrink-0 bg-[#f0f0f0]">
          <div className="flex w-[546px] shrink-0 items-stretch border-t border-r border-black font-['Noto_Sans_CJK_SC',sans-serif] text-[15px] leading-4 text-black">
            <div className="flex w-8 shrink-0">
              <NavBtn label="上一张" d="M7 1v8L3 5z" />
              <NavBtn label="下一张" d="M3 1v8l4-4z" />
            </div>
            <Slope d="M3-1l5 17" w={12} fill="#fff" />
            <button className="bg-white text-base leading-4 font-bold whitespace-nowrap">使用阶段正截面抗弯验算</button>
            <Slope d="M10-1 4 16M10-1l4 17" w={17} fill="#fff" />
            <button className="whitespace-nowrap">受压区高度验算</button>
            <span className="w-2 shrink-0" />
            <Slope d="M8-1 2 16M8-1l4 17" w={15} fill="#fff" />
            <button className="whitespace-nowrap">普通钢筋最小配筋率验算</button>
            <span className="flex-1" />
            <Slope d="M9-1 5 16" />
          </div>
          <button aria-label="向左" className="flex w-[19px] items-center justify-center">
            <Chevron dir="left" />
          </button>
          <div className="flex-1 bg-[#cdcdcd]" />
          <button aria-label="向右" className="mr-3.5 flex w-5 items-center justify-center">
            <Chevron dir="right" />
          </button>
        </div>
      </div>
      <div className="h-0.5 shrink-0" />
    </section>
  );
}

function DocTabs() {
  return (
    <div className="flex h-6 shrink-0 items-start border-t border-[#999] bg-[#d3d3d3] text-[11px] text-black">
      <button aria-label="前一个" className="flex h-[21px] w-4 items-center justify-center">
        <Ic s={10} vb={10}>
          <path d="M7 1v8L3 5z" stroke="#555" />
        </Ic>
      </button>
      <svg width="22" height="21" viewBox="0 0 22 21" aria-hidden="true">
        <path d="M0 0l21 20.500h1" stroke="#777" fill="none" />
      </svg>
      <button className="relative z-10 flex h-[21px] w-[87px] items-center gap-2 border-b border-[#777] pl-2 whitespace-nowrap">
        <CivilLogo />
        MIDAS/Civil
      </button>
      <svg width="20" height="21" viewBox="0 0 20 21" aria-hidden="true">
        <path d="M0 0l20 20.500V0z" fill="#fff" />
        <path d="M0 0l20 20.500H0" stroke="#777" fill="none" />
      </svg>
      <button className="flex h-[21px] items-center gap-2 rounded-br-sm border-r border-b border-[#777] bg-white pr-1.5 pl-[7px] font-bold whitespace-nowrap">
        <CivilLogo />
        使用阶段正截面抗弯验算
      </button>
      <span className="flex-1" />
      <button aria-label="后一个" className="mr-2 flex h-[22px] items-center">
        <Ic s={10} vb={10}>
          <path d="M3 1v8l4-4z" stroke="#555" />
        </Ic>
      </button>
    </div>
  );
}

function MessagePanel() {
  return (
    <section className="flex shrink-0 flex-col bg-white">
      <div className="flex h-[23px] items-center border-t border-r border-white bg-linear-to-b from-[#525152] to-[#605e5f] pr-1 pl-[3px] text-[11px] leading-4 text-[#d6d6d6]">
        <span className="flex-1">信息窗口</span>
        <button aria-label="固定" className="mr-2">
          <Pin />
        </button>
        <button aria-label="关闭面板">
          <Cross />
        </button>
      </div>
      <div className="flex h-[69px] flex-col border-t border-white bg-[#777] p-px pr-0.5 pb-0">
        <div className="mt-0.5 flex h-[65px] border-r-2 border-b border-l border-[#ddd] border-l-[#666] bg-[#fffbf0] font-['Noto_Sans_CJK_SC',sans-serif] text-xs leading-4 text-black">
          <div className="flex-1 pl-px whitespace-pre">
            <p className="h-4">
              <Mixed text="完成生成PSC设计用数据。" />
            </p>
            <p className="h-4">
              <Mixed text="*** 正在读取PSC设计结果" />
            </p>
          </div>
          <div className="flex w-[15px] flex-col items-center bg-[#f0f0f0]">
            <button aria-label="向上" className="flex h-4 items-center">
              <Chevron dir="up" />
            </button>
            <span className="mt-3 h-4 w-full bg-[#cdcdcd]" />
            <button aria-label="向下" className="mt-auto flex h-4 items-center">
              <Chevron dir="down" />
            </button>
          </div>
        </div>
      </div>
      <label className="flex h-5 items-center border-t-2 border-l-2 border-[#777] bg-[#fffbf0] pl-0.5 font-['DejaVu_Sans_Mono',monospace] text-[10px] leading-4 text-black">
        {">>"}
        <input aria-label="命令" className="flex-1 bg-transparent outline-none" />
      </label>
      <div className="mt-px flex h-[17px] bg-[#f0f0f0] font-['Noto_Sans_CJK_SC',sans-serif] text-xs leading-4 text-black">
        <div className="flex w-[730px] shrink-0 border-t border-r border-black">
          <div className="flex w-[73px] pl-px">
            <NavBtn label="第一" d="M8 1v8L4 5zM2 1v8" color="#999" />
            <NavBtn label="上一" d="M7 1v8L3 5z" color="#999" />
            <NavBtn label="下一" d="M3 1v8l4-4z" color="#999" />
            <NavBtn label="最后" d="M2 1v8l4-4zM8 1v8" color="#999" />
          </div>
          <Slope d="M1-1l4 17" w={8} fill="#fff" />
          <button className="bg-white text-[13px] leading-4 font-bold">命令信息</button>
          <Slope d="M9-1 4 16M9-1l4 17" w={17} fill="#fff" />
          <button>分析信息</button>
          <Slope d="M11-1 7 16" w={14} />
        </div>
        <button aria-label="向左" className="ml-1.5 flex w-4 items-center justify-center">
          <Chevron dir="left" />
        </button>
        <span className="w-[17px] bg-[#cdcdcd]" />
        <span className="flex-1" />
        <button aria-label="向右" className="mr-0.5 flex w-4 items-center justify-center">
          <Chevron dir="right" />
        </button>
      </div>
      <div className="h-px" />
    </section>
  );
}

/* ---------- right tools ---------- */

const HGrip = () => (
  <svg width="16" height="3" viewBox="0 0 16 3" aria-hidden="true">
    <path d="M2 1.500h14" stroke="#fff" strokeWidth="3" strokeDasharray="2 2" />
    <path d="M1 1h14" stroke="#333" strokeWidth="2" strokeDasharray="2 2" />
  </svg>
);
const HSep = () => <span className="mt-px h-px w-3.5 bg-[#333]" />;

const side: string[][] = [
  ["zWin", "zDyn", "zIn", "zOut", "zFit"],
  ["zRate", "pan", "rotate"],
  ["redraw", "initial", "|", "cubeIso", "cubeTop", "cubeSide", "cubeFront", "axes", "|", "winBack", "winHand"],
];

function SideTools() {
  return (
    <div className="flex w-[25px] shrink-0 flex-col items-center self-start rounded-b-sm bg-[#d2d2d2]">
      {side.map((g, i) => (
        <div key={i} className="flex flex-col items-center gap-1.5 pt-1 pb-[5px]">
          <HGrip />
          {g.map((n, j) =>
            n === "|" ? (
              <HSep key={j} />
            ) : (
              <button key={j} aria-label={n}>
                <I n={n} />
              </button>
            ),
          )}
        </div>
      ))}
    </div>
  );
}

/* ---------- status bar ---------- */

function UnitSelect({ label, value, width }: { label: string; value: string; width: string }) {
  return (
    <div className={clsx("relative h-[19px] border border-[#999] bg-[#e8e8e8]", width)}>
      <select
        aria-label={label}
        className="h-full w-full appearance-none bg-transparent pl-[3px] font-['Liberation_Serif',serif] text-xs text-black"
      >
        <option>{value}</option>
      </select>
      <span className="pointer-events-none absolute inset-y-0 right-1 flex items-center bg-[#e8e8e8]">
        <svg width="9" height="6" viewBox="0 0 9 6" aria-hidden="true">
          <path d="M1 1l3.500 3.500L8 1" stroke="#444" fill="none" />
        </svg>
      </span>
    </div>
  );
}

const SBtn = ({ label, children, cyan }: { label: string; children: ReactNode; cyan?: boolean }) => (
  <button
    aria-label={label}
    className={clsx("flex h-[18px] w-[18px] items-center justify-center border bg-[#e6e6e6]", cyan ? "border-[#30d8e8]" : "border-[#999]")}
  >
    {children}
  </button>
);

function StatusBar() {
  return (
    <footer className="flex h-[22px] shrink-0 items-center bg-[#282828] text-[11px] text-white">
      <span className="w-[567px] shrink-0 pl-[5px]">如想查找帮助, 请按F1键</span>
      <span className="flex h-full w-[84px] shrink-0 items-center border-l border-[#777] pl-[9px]">无-5</span>
      <span className="flex h-full w-[171px] shrink-0 items-center border-l border-[#777] pl-[3px]">U: 9.3, 0, 0</span>
      <span className="flex h-full flex-1 items-center border-l border-[#777] pl-[3px] whitespace-nowrap">G: 9.3, 0, 0</span>
      <div className="flex h-5 shrink-0 items-center bg-[#f0f0f0] text-black">
        <UnitSelect label="力单位" value="kN" width="w-[50px]" />
        <span className="w-px" />
        <UnitSelect label="长度单位" value="m" width="w-[52px]" />
        <span className="w-[7px]" />
        <div className="flex gap-[5px]">
          <SBtn label="移动" cyan>
            <Ic>
              <path d="M8 1v14M1 8h14" stroke="#000" strokeWidth="1.400" />
              <circle cx="8" cy="8" r="3.500" fill="#fff" stroke="#000" />
              <path d="M8 6v4M6 8h4" stroke="#000" />
            </Ic>
          </SBtn>
          <SBtn label="对齐" cyan>
            <Ic>
              <path d="M5.500 1v14M12.500 2v4M12.500 10v4M1 8h5M8 4.500h6M8 11.500h6" stroke="#000" strokeWidth="1.400" />
              <path d="M7 8l4-2.500v5z" fill="#000" />
            </Ic>
          </SBtn>
          <SBtn label="运行">
            <Ic>
              <path d="M5 3v10l7-5z" fill="#3a7f95" stroke="#444" />
            </Ic>
          </SBtn>
        </div>
        <span className="w-[5px]" />
        <UnitSelect label="过滤" value="none" width="w-11" />
        <span className="w-1.5" />
        <button className="h-[18px] w-[18px] border border-[#20e0f0] bg-[#e6e6e6] font-['Liberation_Serif',serif] text-sm leading-4 font-bold">?</button>
        <button aria-label="选择" className="ml-[5px] h-[18px] w-[18px] bg-[#00ffff]" />
        <input aria-label="起始" defaultValue="0" className="w-5 bg-white text-center font-['Liberation_Serif',serif] text-xs" />
        <span className="flex w-4 flex-col items-center gap-1">
          <Caret className="rotate-180 text-[#777]" />
          <Caret className="text-[#777]" />
        </span>
        <span className="w-3 text-center font-['Liberation_Serif',serif] text-xs">/</span>
        <input aria-label="总数" defaultValue="?" className="w-8 border-l border-[#999] bg-white text-center font-['Liberation_Serif',serif] text-xs font-bold" />
        <span className="mr-1 flex h-full w-4 flex-col items-center justify-center gap-1 bg-[#b8bec6]">
          <Caret className="rotate-180" />
          <Caret />
        </span>
      </div>
    </footer>
  );
}

export default function App() {
  return (
    <div className="relative flex h-screen flex-col overflow-hidden bg-[#5b5959] font-['Noto_Sans','Noto_Sans_CJK_SC',sans-serif]">
      <Header />
      <Ribbon />
      <Toolbar />
      <main className="flex min-h-0 flex-1 pt-px">
        <TreePanel />
        <div className="w-[5px] shrink-0 bg-[#454744]" />
        <div className="mr-px flex min-w-0 flex-1 flex-col">
          <ResultView />
          <DocTabs />
          <div className="h-1 shrink-0 bg-[#4a4c49]" />
          <MessagePanel />
        </div>
        <SideTools />
        <div className="w-px shrink-0" />
      </main>
      <StatusBar />

      {/* watermark */}
      <div className="pointer-events-none absolute right-1.5 bottom-1 w-[108px] text-[#bdbdbd] opacity-80">
        <p className="mb-1 text-[30px] leading-8 font-['Noto_Sans_CJK_TC',sans-serif] italic">橋頭堡</p>
        <p className="text-xs leading-4 font-bold font-['Liberation_Serif',serif]">Bridgehead.com.cn</p>
      </div>
    </div>
  );
}
